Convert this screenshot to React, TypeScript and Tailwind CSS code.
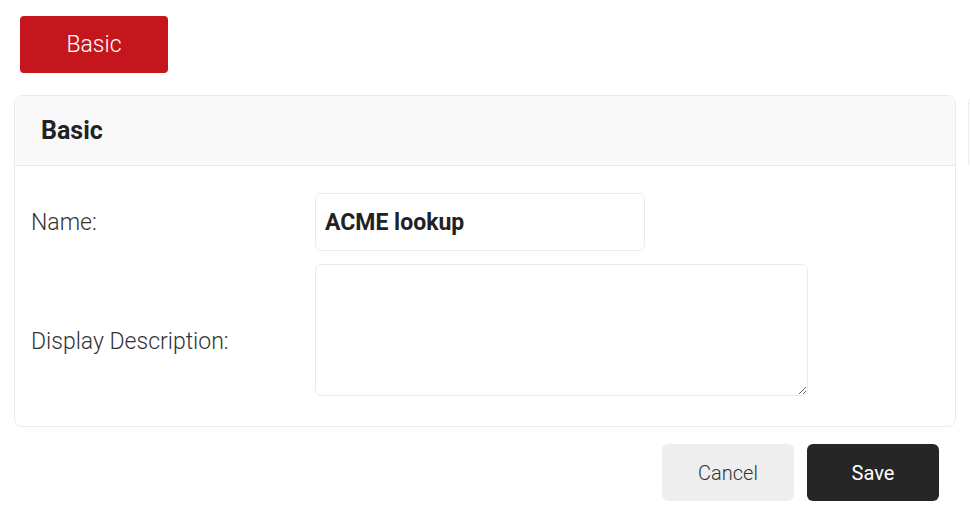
export default function App() {
	return (
		<div className="relative w-[970px] h-[514px] bg-white overflow-hidden" style={{ fontFamily: "Roboto, 'Liberation Sans', sans-serif" }}>
			<div className="pt-4 pl-5">
				<button className="w-[148px] h-[57px] rounded-[4px] bg-[#c4161c] text-white text-[23px] font-light pt-[2px]">
					Basic
				</button>
			</div>

			<div className="flex mt-[22px] ml-[14px] gap-3">
				<div className="w-[942px] shrink-0 border border-[#ebebeb] rounded-lg overflow-hidden">
					<div className="h-[70px] bg-[#f9f9f9] border-b border-[#ebebeb] flex items-center pl-[26px]">
						<h2 className="text-[25px] font-bold text-[#222]">Basic</h2>
					</div>
					<div className="pt-[27px] pb-[30px] pl-4">
						<div className="grid grid-cols-[284px_1fr] gap-y-[13px] items-center">
							<label className="text-[23px] font-light text-[#333] pt-[3px]">Name:</label>
							<div className="w-[330px] h-[58px] border border-[#ebebeb] rounded-md flex items-center px-[9px] pt-[2px] text-[23px] font-bold text-[#222]">
								ACME lookup
							</div>
							<label className="text-[23px] font-light text-[#333] pt-[24px]">Display Description:</label>
							<textarea className="w-[493px] h-[132px] border border-[#ebebeb] rounded-md outline-none resize"></textarea>
						</div>
					</div>
				</div>
				<div className="w-[10px] shrink-0 h-[70px] border-l border-t border-[#ebebeb] bg-[#fcfcfc] rounded-tl-lg"></div>
			</div>

			<div className="flex justify-end gap-[13px] mt-[17px] pr-[31px]">
				<button className="w-[132px] h-[57px] rounded-md bg-[#eeeeee] text-[#333] text-[20px] font-light">
					Cancel
				</button>
				<button className="w-[132px] h-[57px] rounded-md bg-[#262626] text-white text-[20px]">
					Save
				</button>
			</div>
		</div>
	);
}
